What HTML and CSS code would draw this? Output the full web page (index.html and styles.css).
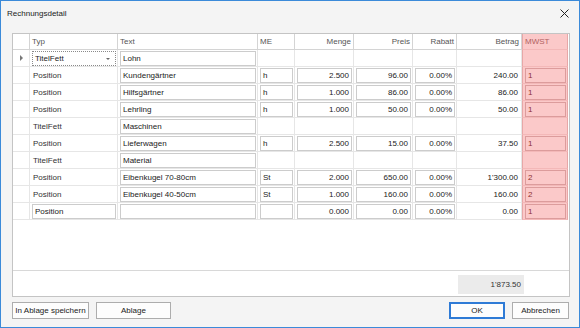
FILE: index.html
```html
<!DOCTYPE html>
<html lang="de">
<head>
  <meta charset="UTF-8">
  <title>Rechnungsdetail</title>
  <link rel="stylesheet" href="styles.css">
</head>
<body>

<div class="window">
  <div class="titlebar">
    <span class="title">Rechnungsdetail</span>
    <svg class="close" width="9" height="9" viewBox="0 0 9 9"><path d="M0.5 0.5L8.5 8.5M8.5 0.5L0.5 8.5" stroke="#222" stroke-width="1"/></svg>
  </div>

  <div class="content">
    <div class="grid">
      <table class="rows">
        <colgroup>
          <col style="width:17px"><col style="width:88px"><col style="width:140px"><col style="width:37px">
          <col style="width:59px"><col style="width:59px"><col style="width:44px"><col style="width:65px"><col style="width:46px">
        </colgroup>
        <thead>
          <tr>
            <th></th><th>Typ</th><th>Text</th><th>ME</th>
            <th class="num">Menge</th><th class="num">Preis</th><th class="num">Rabatt</th><th class="num">Betrag</th><th class="mw">MWST</th>
          </tr>
        </thead>
        <tbody>
          <tr>
            <td class="ind"><span class="arrow"></span></td>
            <td><span class="ed combo">TitelFett<span class="drop"></span></span></td>
            <td><span class="ed">Lohn</span></td>
            <td></td><td></td><td></td><td></td><td></td><td class="mw"></td>
          </tr>
          <tr>
            <td class="ind"></td><td class="typ">Position</td>
            <td><span class="ed">Kundengärtner</span></td><td><span class="ed">h</span></td>
            <td><span class="ed num">2.500</span></td><td><span class="ed num">96.00</span></td><td><span class="ed num">0.00%</span></td>
            <td class="betrag">240.00</td><td class="mw"><span class="ed">1</span></td>
          </tr>
          <tr>
            <td class="ind"></td><td class="typ">Position</td>
            <td><span class="ed">Hilfsgärtner</span></td><td><span class="ed">h</span></td>
            <td><span class="ed num">1.000</span></td><td><span class="ed num">86.00</span></td><td><span class="ed num">0.00%</span></td>
            <td class="betrag">86.00</td><td class="mw"><span class="ed">1</span></td>
          </tr>
          <tr>
            <td class="ind"></td><td class="typ">Position</td>
            <td><span class="ed">Lehrling</span></td><td><span class="ed">h</span></td>
            <td><span class="ed num">1.000</span></td><td><span class="ed num">50.00</span></td><td><span class="ed num">0.00%</span></td>
            <td class="betrag">50.00</td><td class="mw"><span class="ed">1</span></td>
          </tr>
          <tr>
            <td class="ind"></td><td class="typ">TitelFett</td>
            <td><span class="ed">Maschinen</span></td>
            <td></td><td></td><td></td><td></td><td></td><td class="mw"></td>
          </tr>
          <tr>
            <td class="ind"></td><td class="typ">Position</td>
            <td><span class="ed">Lieferwagen</span></td><td><span class="ed">h</span></td>
            <td><span class="ed num">2.500</span></td><td><span class="ed num">15.00</span></td><td><span class="ed num">0.00%</span></td>
            <td class="betrag">37.50</td><td class="mw"><span class="ed">1</span></td>
          </tr>
          <tr>
            <td class="ind"></td><td class="typ">TitelFett</td>
            <td><span class="ed">Material</span></td>
            <td></td><td></td><td></td><td></td><td></td><td class="mw"></td>
          </tr>
          <tr>
            <td class="ind"></td><td class="typ">Position</td>
            <td><span class="ed">Eibenkugel 70-80cm</span></td><td><span class="ed">St</span></td>
            <td><span class="ed num">2.000</span></td><td><span class="ed num">650.00</span></td><td><span class="ed num">0.00%</span></td>
            <td class="betrag">1'300.00</td><td class="mw"><span class="ed">2</span></td>
          </tr>
          <tr>
            <td class="ind"></td><td class="typ">Position</td>
            <td><span class="ed">Eibenkugel 40-50cm</span></td><td><span class="ed">St</span></td>
            <td><span class="ed num">1.000</span></td><td><span class="ed num">160.00</span></td><td><span class="ed num">0.00%</span></td>
            <td class="betrag">160.00</td><td class="mw"><span class="ed">2</span></td>
          </tr>
          <tr>
            <td class="ind"></td><td><span class="ed">Position</span></td>
            <td><span class="ed"></span></td><td><span class="ed"></span></td>
            <td><span class="ed num">0.000</span></td><td><span class="ed num">0.00</span></td><td><span class="ed num">0.00%</span></td>
            <td class="betrag">0.00</td><td class="mw"><span class="ed">1</span></td>
          </tr>
        </tbody>
      </table>

      <div class="filler"></div>

      <div class="summary">
        <span class="total">1'873.50</span>
      </div>
    </div>

    <div class="buttons">
      <button class="btn wide">In Ablage speichern</button>
      <button class="btn">Ablage</button>
      <span class="spacer"></span>
      <button class="btn ok">OK</button>
      <button class="btn">Abbrechen</button>
    </div>
  </div>
</div>

</body>
</html>
```

FILE: styles.css
```css
body {
  margin: 0;
  font-family: "Liberation Sans", Arial, sans-serif;
  font-size: 8px;
  color: #222;
  background-color: #f4f4f4;
}

.window {
  width: 580px;
  height: 328px;
  box-sizing: border-box;
  border: 1px solid #3b8ad9;
  background-color: #f4f4f4;
  display: flex;
  flex-direction: column;
}

.titlebar {
  height: 25px;
  display: flex;
  align-items: center;
  padding: 0 10px 0 6px;
}

.title {
  flex: 1;
  font-size: 8px;
  color: #222;
}

.close {
  display: block;
}

.content {
  flex: 1;
  display: flex;
  flex-direction: column;
  padding: 7px 9px 0 11px;
}

/* Grid */
.grid {
  height: 264px;
  box-sizing: border-box;
  border: 1px solid #c4c4c4;
  background-color: white;
  display: flex;
  flex-direction: column;
}

.rows {
  width: 555px;
  table-layout: fixed;
  border-collapse: separate;
  border-spacing: 0;
}

.rows th,
.rows td {
  height: 16px;
  padding: 0;
  border-right: 1px solid #e6e6e6;
  border-bottom: 1px solid #e6e6e6;
  white-space: nowrap;
  overflow: hidden;
  box-sizing: border-box;
}

.rows th {
  font-weight: normal;
  text-align: left;
  color: #555;
  padding: 0 2px;
  border-right-color: #d4d4d4;
  border-bottom-color: #d4d4d4;
}

.rows th.num {
  text-align: right;
  padding-right: 2px;
}

.rows td {
  vertical-align: top;
  padding: 1px 1px 0 2px;
}

.rows td.typ {
  padding: 0 0 0 3px;
  vertical-align: middle;
  color: #333;
}

.rows td.betrag {
  text-align: right;
  vertical-align: middle;
  padding: 0 3px 0 0;
}

.rows td.ind {
  vertical-align: middle;
  padding: 0;
  text-align: center;
}

.arrow {
  display: inline-block;
  width: 0;
  height: 0;
  border-top: 3px solid transparent;
  border-bottom: 3px solid transparent;
  border-left: 3px solid #777;
  vertical-align: middle;
}

/* MWST column */
.rows .mw {
  background-color: #fbc9c9;
  border-left: 1px solid #e7a7a7;
  border-right: 1px solid #e7a7a7;
  border-bottom-color: #f3b8b8;
  color: #9c3a3a;
}

.rows th.mw {
  padding-left: 2px;
  color: #b06262;
}

/* Cell editors */
.ed {
  display: block;
  height: 15px;
  line-height: 13px;
  box-sizing: border-box;
  border: 1px solid #cccccc;
  background-color: white;
  padding: 0 2px;
  overflow: hidden;
}

.ed.num {
  text-align: right;
}

.mw .ed {
  background-color: #fbc9c9;
  border-color: #dc9c9c;
  color: #8e3030;
}

.ed.combo {
  position: relative;
  border: 1px dotted #8a8a8a;
}

.drop {
  position: absolute;
  right: 5px;
  top: 6px;
  width: 0;
  height: 0;
  border-left: 2px solid transparent;
  border-right: 2px solid transparent;
  border-top: 2px solid #666;
}

.filler {
  flex: 1;
}

.summary {
  height: 26px;
  border-top: 1px solid #d8d8d8;
  display: flex;
  justify-content: flex-end;
  align-items: flex-start;
  padding: 4px 45px 0 0;
  box-sizing: border-box;
}

.total {
  width: 66px;
  height: 19px;
  line-height: 19px;
  box-sizing: border-box;
  padding-right: 3px;
  text-align: right;
  background-color: #ebebeb;
  color: #333;
}

/* Buttons */
.buttons {
  display: flex;
  gap: 7px;
  margin-top: 5px;
  padding-right: 1px;
}

.spacer {
  flex: 1;
}

.btn {
  height: 17px;
  width: 75px;
  padding: 0;
  font-family: "Liberation Sans", Arial, sans-serif;
  font-size: 8px;
  color: #222;
  background-color: #fdfdfd;
  border: 1px solid #adadad;
}

.btn.wide {
  width: 77px;
}

.btn.ok {
  width: 56px;
  border-color: #2f7bd6;
  box-shadow: inset 0 0 0 1px #2f7bd6;
}

.btn + .btn:last-child {
  width: 57px;
}
```
